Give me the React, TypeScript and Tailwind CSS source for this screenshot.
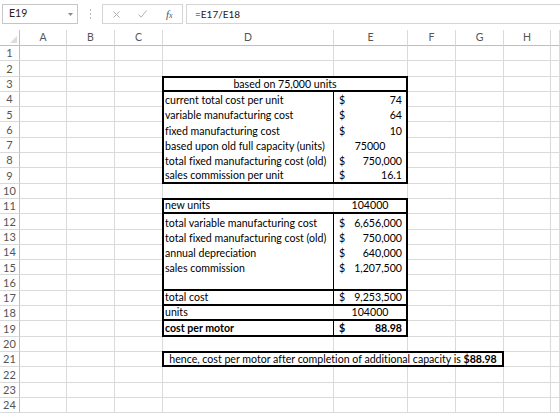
import React from "react";

const TEMPLATE =
  "grid grid-cols-[20px_47px_48px_48px_171px_74px_48px_48px_47px_9px] grid-rows-[16px_repeat(24,15.3px)]";

const LETTERS = ["A", "B", "C", "D", "E", "F", "G", "H", ""];
const ROWS = Array.from({ length: 24 }, (_, i) => i + 1);

interface LineProps {
  label?: string;
  value?: string;
  dollar?: boolean;
  center?: boolean;
  bold?: boolean;
  divider?: "black" | "gray";
  thickBottom?: boolean;
  grow?: boolean;
}

const Line = ({
  label = "",
  value = "",
  dollar = true,
  center = false,
  bold = false,
  divider = "black",
  thickBottom = false,
  grow = false,
}: LineProps) => (
  <div
    className={`flex ${grow ? "flex-1" : "h-[15.3px] shrink-0"} ${
      thickBottom ? "border-b-2 border-b-black" : ""
    } ${bold ? "font-bold" : ""}`}
  >
    <div
      className={`w-[170px] shrink-0 flex items-end pl-[1px] pb-[1px] leading-[12px] whitespace-nowrap border-r ${
        divider === "black" ? "border-r-black" : "border-r-[#dadada]"
      }`}
    >
      {label}
    </div>
    {center ? (
      <div className="flex-1 flex items-end justify-center pb-[1px] leading-[12px]">
        {value}
      </div>
    ) : (
      <div className="flex-1 flex items-end justify-between pl-[5px] pr-[4px] pb-[1px] leading-[12px]">
        <span>{dollar && value ? "$" : ""}</span>
        <span>{value}</span>
      </div>
    )}
  </div>
);

const FormulaBar = () => (
  <div className="h-[30px] pt-[4px] flex items-start">
    <div className="ml-[2px] w-[76px] h-[20px] border border-[#c6c6c6] flex items-center justify-between pl-[6px] pr-[4px]">
      <span className="text-[10.5px] text-[#222]">E19</span>
      <svg width="5" height="3" viewBox="0 0 5 3">
        <path d="M0 0H5L2.5 3Z" fill="#8a8a8a" />
      </svg>
    </div>
    <div className="w-[24px] h-[20px] flex flex-col items-center justify-center gap-[2px]">
      <div className="w-px h-[2px] bg-[#b8b8b8]" />
      <div className="w-px h-[2px] bg-[#b8b8b8]" />
      <div className="w-px h-[2px] bg-[#b8b8b8]" />
    </div>
    <div className="w-[81px] h-[20px] border border-[#d4d4d4] flex items-center pl-[10px]">
      <svg width="7" height="7" viewBox="0 0 7 7">
        <path d="M0.5 0.5L6.5 6.5M6.5 0.5L0.5 6.5" stroke="#b0b0b0" strokeWidth="1" />
      </svg>
      <svg className="ml-[18px]" width="9" height="8" viewBox="0 0 9 8">
        <path d="M0.5 4.5L3.2 7.2L8.5 0.5" stroke="#b0b0b0" strokeWidth="1" fill="none" />
      </svg>
      <span className="ml-[19px] [font-family:'Liberation_Serif',serif] italic text-[11px] leading-none text-[#555]">
        f<span className="text-[8px]">x</span>
      </span>
    </div>
    <div className="ml-[3px] flex-1 h-[20px] border border-r-0 border-[#d4d4d4] flex items-center pl-[8px] text-[10px] text-[#222]">
      =E17/E18
    </div>
  </div>
);

const Sheet = () => (
  <div className="grid">
    {/* grid lines and headers */}
    <div className={`col-start-1 row-start-1 ${TEMPLATE}`}>
      <div className="flex items-end justify-end p-[2px] border-r border-b border-[#bfbfbf]">
        <svg width="7" height="7" viewBox="0 0 7 7">
          <path d="M7 0V7H0Z" fill="#dcdcdc" />
        </svg>
      </div>
      {LETTERS.map((l, i) => (
        <div
          key={i}
          className="flex items-center justify-center border-r border-b border-r-[#dadada] border-b-[#bfbfbf] text-[10.5px] text-[#555]"
        >
          {l}
        </div>
      ))}
      {ROWS.map((r) => (
        <React.Fragment key={r}>
          <div className="flex items-center justify-center pt-px border-r border-b border-r-[#bfbfbf] border-b-[#dadada] text-[11px] text-[#555]">
            {r}
          </div>
          {LETTERS.map((_, i) => (
            <div key={i} className="border-r border-b border-[#dadada]" />
          ))}
        </React.Fragment>
      ))}
    </div>

    {/* bordered ranges */}
    <div
      className={`col-start-1 row-start-1 ${TEMPLATE} text-[10.6px] text-black [font-variant-ligatures:none]`}
    >
      <div className="col-start-5 col-span-2 row-start-4 row-span-7 -mt-px -ml-px border-2 border-black bg-white flex flex-col">
        <div className="h-[14.3px] shrink-0 border-b-2 border-b-black flex items-end justify-center leading-[12px]">
          based on 75,000 units
        </div>
        <Line label="current total cost per unit" value="74" />
        <Line label="variable manufacturing cost" value="64" />
        <Line label="fixed manufacturing cost" value="10" />
        <Line label="based upon old full capacity (units)" value="75000" center />
        <Line label="total fixed manufacturing cost (old)" value="750,000" />
        <Line label="sales commission per unit" value="16.1" grow />
      </div>

      <div className="col-start-5 col-span-2 row-start-12 row-span-9 -mt-px -ml-px border-2 border-black bg-white flex flex-col">
        <div className="h-[14.3px] shrink-0 border-b-2 border-b-black flex">
          <div className="w-[170px] shrink-0 flex items-end pl-[1px] pb-[1px] leading-[12px] border-r border-r-[#dadada]">
            new units
          </div>
          <div className="flex-1 flex items-end justify-center pb-[1px] leading-[12px]">104000</div>
        </div>
        <Line label="total variable manufacturing cost" value="6,656,000" />
        <Line label="total fixed manufacturing cost (old)" value="750,000" />
        <Line label="annual depreciation" value="640,000" />
        <Line label="sales commission" value="1,207,500" />
        <Line thickBottom />
        <Line label="total cost" value="9,253,500" thickBottom />
        <Line label="units" value="104000" center divider="gray" thickBottom />
        <Line label="cost per motor" value="88.98" bold grow />
      </div>

      <div className="col-start-5 col-span-4 row-start-22 -mt-px -ml-px border-2 border-black bg-white flex items-end justify-center leading-[12px] whitespace-nowrap">
        hence, cost per motor after completion of additional capacity is&nbsp;
        <span className="font-bold">$88.98</span>
      </div>
    </div>
  </div>
);

export default function App() {
  return (
    <div className="w-[560px] h-[413px] overflow-hidden bg-white [font-family:Lato,'Liberation_Sans',sans-serif] text-[#222]">
      <FormulaBar />
      <Sheet />
    </div>
  );
}
